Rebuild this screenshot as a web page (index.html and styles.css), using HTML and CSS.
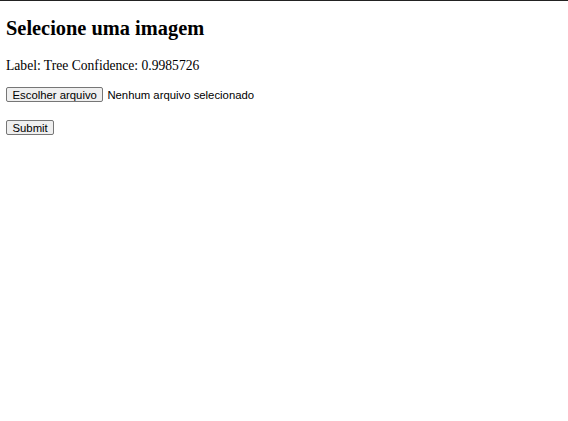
FILE: index.html
```html
<!DOCTYPE html>
<html>
<head>
<meta charset="utf-8">
<link rel="stylesheet" href="styles.css">
</head>
<body>
<div class="topline"></div>
<main class="page">
  <h2 class="title">Selecione uma imagem</h2>
  <p class="result">Label: Tree Confidence: 0.9985726</p>
  <form class="form">
    <div class="file-row">
      <button type="button" class="btn">Escolher arquivo</button>
      <span class="file-status">Nenhum arquivo selecionado</span>
    </div>
    <div class="submit-row">
      <button type="button" class="btn">Submit</button>
    </div>
  </form>
</main>
</body>
</html>
```

FILE: styles.css
```css
html, body {
  margin: 0;
  padding: 0;
  background: #fff;
}
.topline {
  height: 1px;
  background: #222;
}
.page {
  padding: 0 6px;
  font-family: "Liberation Serif", serif;
  color: #000;
}
.title {
  font-size: 20.4px;
  font-weight: bold;
  margin: 16px 0 0;
  line-height: 23.5px;
}
.result {
  font-size: 13.6px;
  margin: 17px 0 0;
  line-height: 15.6px;
}
.form {
  margin-top: 14px;
  font-family: "Liberation Sans", Arial, sans-serif;
  font-size: 11.33px;
}
.file-row {
  display: flex;
  align-items: center;
  gap: 4px;
}
.btn {
  font-family: "Liberation Sans", Arial, sans-serif;
  font-size: 11.33px;
  color: #000;
  background: #efefef;
  border: 1px solid #767676;
  border-radius: 2px;
  padding: 1px 5.5px 0;
  line-height: 12px;
  height: 15px;
  margin: 0;
}
.submit-row {
  margin-top: 18px;
  display: flex;
}
```
